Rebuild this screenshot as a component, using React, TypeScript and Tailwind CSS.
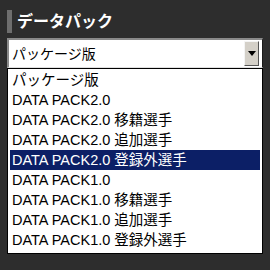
const items = [
  "パッケージ版",
  "DATA PACK2.0",
  "DATA PACK2.0 移籍選手",
  "DATA PACK2.0 追加選手",
  "DATA PACK2.0 登録外選手",
  "DATA PACK1.0",
  "DATA PACK1.0 移籍選手",
  "DATA PACK1.0 追加選手",
  "DATA PACK1.0 登録外選手",
];

const App = () => {
  const selected = 4;
  return (
    <div className="w-[270px] h-[270px] bg-[#2d2d2d] pt-[10px] px-[7px] font-['Liberation_Sans','Noto_Sans_CJK_JP',sans-serif]">
      <div className="flex items-center h-[23px]">
        <div className="w-[5px] h-[23px] bg-[#6e6e6e]"></div>
        <h1 className="ml-[5px] text-[16px] font-bold text-white leading-none">データパック</h1>
      </div>

      <div className="mt-[5px] w-[256px]">
        <div className="h-[30px] flex items-center bg-white border-t-2 border-l-2 border-t-[#8a8a8a] border-l-[#8a8a8a] border-r border-b border-r-[#1a1a1a] border-b-[#e0e0e0]">
          <span className="flex-1 pl-[3px] text-[14px] text-black leading-none">パッケージ版</span>
          <div className="w-[15px] h-[25px] mr-[3px] bg-[#d4d0c8] border border-t-[#f4f4f4] border-l-[#f4f4f4] border-r-[#555] border-b-[#555] flex items-center justify-center">
            <svg width="8" height="5" viewBox="0 0 8 5">
              <polygon points="0,0 8,0 4,5" fill="#000" />
            </svg>
          </div>
        </div>

        <div className="bg-white border border-black px-[2px] pt-px pb-[3px]">
          {items.map((t, i) => (
            <div
              key={t}
              className={
                "h-[20px] flex items-center pl-[2px] text-[14.5px] leading-none " +
                (i === selected ? "bg-[#0c1f66] text-white" : "text-black")
              }
            >
              {t}
            </div>
          ))}
        </div>
      </div>
    </div>
  );
};

export default App;
